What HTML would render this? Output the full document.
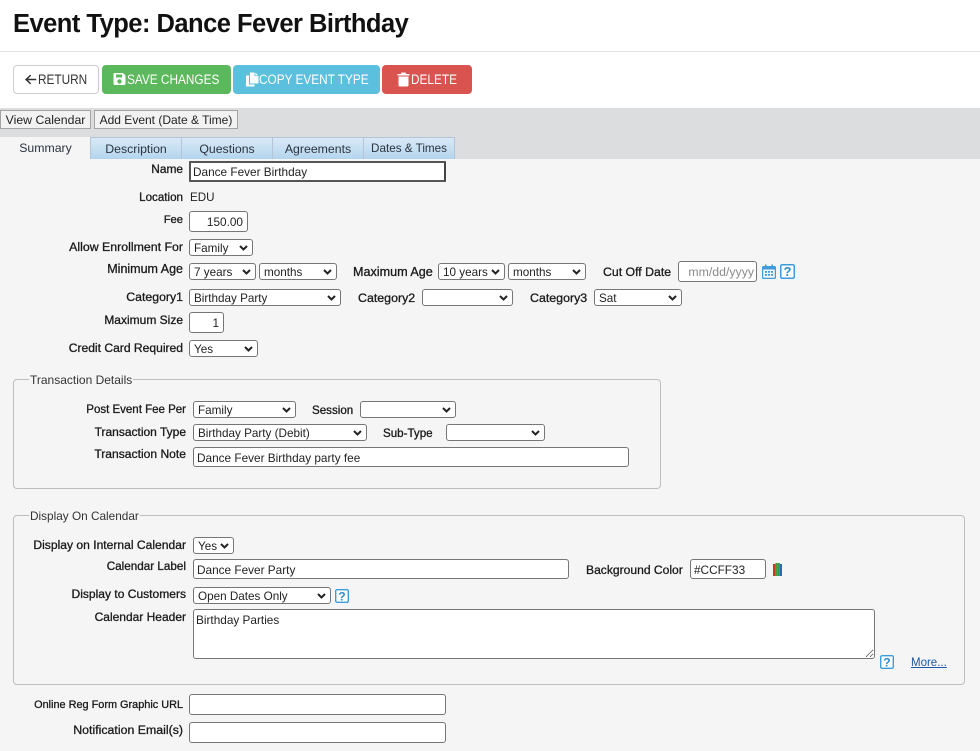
<!DOCTYPE html>
<html><head><meta charset="utf-8"><title>Event Type</title>
<style>
html,body{margin:0;padding:0}
body{width:980px;height:751px;overflow:hidden;background:#f5f5f5;position:relative;font-family:"Liberation Sans",sans-serif;font-size:12px;color:#222}
.a,label,select,input,textarea,.btn,.tab,.g{position:absolute;box-sizing:border-box}
#top{left:0;top:0;width:980px;height:108px;background:#fff}
#hr{left:0;top:51px;width:980px;height:1px;background:#e3e3e3}
h1{position:absolute;left:13px;top:9px;margin:0;font-size:25.5px;line-height:30px;font-weight:bold;color:#111;white-space:nowrap;letter-spacing:-.52px}
.btn{top:65px;height:29px;border-radius:4px;color:#fff;font-size:13.5px;line-height:29px;white-space:nowrap}
.btn svg{position:absolute;top:7px;fill:currentColor}
.btn span{position:absolute;top:0;transform:scaleX(.875);transform-origin:0 50%}
#band{left:0;top:108px;width:980px;height:51px;background:#dcddde}
.g{top:110px;height:19px;background:#f2f2f2;border:1px solid #a3a3a3;font-size:12.3px;line-height:18px;text-align:center;color:#222;white-space:nowrap}
.tab{top:137px;height:22px;background:linear-gradient(#d9e9f6,#b4d5ee);border:1px solid #b5c3d8;border-bottom:0;border-left:0;font-size:12.3px;line-height:22px;text-align:center;color:#2a3340;white-space:nowrap}
label{font-size:12.2px;line-height:14px;height:14px;text-align:right;white-space:nowrap;color:#1a1a1a;-webkit-text-stroke:.3px #1a1a1a}
.l1{left:0;width:183px}.l2{left:0;width:186px}
select,input,textarea{font-family:"Liberation Sans",sans-serif;font-size:11.8px;color:#222;background:#fff;border:1px solid #767676;border-radius:3px;margin:0;outline:0}
select{height:17px;padding:2px 0 0 4px;-webkit-appearance:none;appearance:none;font-size:11.7px;line-height:14px}
input{padding:2px 3px 0}
input.h21{padding-top:1px}
textarea{padding:3px 2px;resize:both}
.r{text-align:right;padding-right:4px}
fieldset{position:absolute;box-sizing:border-box;margin:0;padding:0;border:1px solid #bdbdbd;border-radius:4px;background:transparent}
legend{margin-left:15px;padding:0 1px;font-size:12px;line-height:13px;color:#333;position:relative;top:1px}
.t{position:absolute;white-space:nowrap;font-size:11.6px;line-height:14px}
.ic,.cv{position:absolute}
.cv{width:9px;height:6px}
a{position:absolute;color:#1e56a8;text-decoration:underline;font-size:11.5px;line-height:14px}
</style></head><body>
<div class="a" id="top"></div><div class="a" id="hr"></div>
<h1>Event Type: Dance Fever Birthday</h1>

<div class="btn" style="left:13px;width:86px;background:#fff;border:1px solid #ccc;color:#333">
<svg style="left:10px;top:7px" width="13" height="13" viewBox="0 0 13 13"><path d="M6.2 1.6 7.2 2.6 4 5.8H12.2V7.2H4L7.2 10.4 6.2 11.4 1 6.5Z"/></svg><span style="left:24px;top:-1px">RETURN</span></div>
<div class="btn" style="left:102px;width:129px;background:#5cb85c">
<svg style="left:11px" width="13" height="14" viewBox="0 0 13 14"><path fill-rule="evenodd" d="M1.5 1H10L12.5 3.5V11.5Q12.5 13 11 13H2Q.5 13 .5 11.5V2Q.5 1 1.5 1ZM3 2.5V5.5H9V2.5ZM6.5 7.2A2.2 2.2 0 1 0 6.5 11.6 2.2 2.2 0 1 0 6.5 7.2Z"/></svg><span style="left:25px">SAVE CHANGES</span></div>
<div class="btn" style="left:233px;width:147px;background:#5bc0de">
<svg style="left:12px" width="14" height="15" viewBox="0 0 14 15"><path d="M5 .5H9.5V4H13.5V11.5H5Z M10.3.8 13.2 3.2H10.3Z M1 3.5H4V12.5H9.5V14.5H1Z"/></svg><span style="left:26px">COPY EVENT TYPE</span></div>
<div class="btn" style="left:382px;width:90px;background:#d9534f">
<svg style="left:15px" width="13" height="15" viewBox="0 0 13 15"><path d="M4.5 .5H8.5L9.2 2H12.5V3.5H.5V2H3.8ZM1.5 4.5H11.5V13Q11.5 14.5 10 14.5H3Q1.5 14.5 1.5 13Z"/></svg><span style="left:29px">DELETE</span></div>

<div class="a" id="band"></div>
<div class="g" style="left:0;width:91px">View Calendar</div>
<div class="g" style="left:94px;width:144px;font-size:12px">Add Event (Date &amp; Time)</div>
<div class="tab" style="left:0;width:91px;background:#f5f5f5;border:0">Summary</div>
<div class="tab" style="left:90px;width:92px;border-left:1px solid #b5c3d8">Description</div>
<div class="tab" style="left:182px;width:91px">Questions</div>
<div class="tab" style="left:273px;width:91px">Agreements</div>
<div class="tab" style="left:364px;width:91px;font-size:11.7px">Dates &amp; Times</div>

<label class="l1" style="top:162px;font-size:11.9px">Name</label>
<input class="h21" style="left:189px;top:161px;width:257px;height:21px;border:2px solid #555;border-right-color:#444;border-radius:1px;padding:1px 2px 0" value="Dance Fever Birthday">
<label class="l1" style="top:191px;font-size:11.6px">Location</label>
<div class="t" style="left:190px;top:191px">EDU</div>
<label class="l1" style="top:213px;font-size:11.2px">Fee</label>
<input class="r h21" style="left:189px;top:211px;width:59px;height:21px;padding-right:4px" value="150.00">
<label class="l1" style="top:240px;font-size:12.35px">Allow Enrollment For</label>
<select style="left:189px;top:239px;width:64px"><option>Family</option></select>
<label class="l1" style="top:262px;font-size:12.5px">Minimum Age</label>
<select style="left:189px;top:263px;width:67px"><option>7 years</option></select>
<select style="left:259px;top:263px;width:78px"><option>months</option></select>
<label style="left:353px;top:265px;font-size:12.6px">Maximum Age</label>
<select style="left:438px;top:263px;width:67px"><option>10 years</option></select>
<select style="left:508px;top:263px;width:78px"><option>months</option></select>
<label style="left:603px;top:265px;font-size:12.3px">Cut Off Date</label>
<input style="left:678px;top:261px;width:79px;height:21px;text-align:right;padding:0 2px 0 0;color:#8a8a8a;font-size:12.3px" value="mm/dd/yyyy">
<svg class="ic" style="left:762px;top:264px" width="14" height="15" viewBox="0 0 14 15"><path fill="#3d9bdc" fill-rule="evenodd" d="M3 .5H4.5V2H9.5V.5H11V2H12.5Q14 2 14 3.5V13.5Q14 15 12.5 15H1.5Q0 15 0 13.5V3.5Q0 2 1.5 2H3ZM1.2 5.5V13.3Q1.2 13.8 1.7 13.8H12.3Q12.8 13.8 12.8 13.3V5.5ZM3 7H5V8.7H3ZM6 7H8V8.7H6ZM9 7H11V8.7H9ZM3 10H5V11.7H3ZM6 10H8V11.7H6ZM9 10H11V11.7H9Z"/></svg>
<svg class="ic" style="left:780px;top:264px" width="15" height="15" viewBox="0 0 15 15"><rect x=".75" y=".75" width="13.5" height="13.5" rx="1.5" fill="#fff" stroke="#3d9bdc" stroke-width="1.5"/><text x="7.5" y="12.2" text-anchor="middle" font-family="Liberation Sans" font-weight="bold" font-size="13" fill="#2f8ccc">?</text></svg>
<label class="l1" style="top:290px;font-size:12.3px">Category1</label>
<select style="left:189px;top:289px;width:152px"><option>Birthday Party</option></select>
<label style="left:358px;top:291px;font-size:12.4px">Category2</label>
<select style="left:422px;top:289px;width:91px"><option></option></select>
<label style="left:530px;top:291px;font-size:12.4px">Category3</label>
<select style="left:594px;top:289px;width:88px"><option>Sat</option></select>
<label class="l1" style="top:313px;font-size:12px">Maximum Size</label>
<input class="r h21" style="left:189px;top:312px;width:35px;height:21px;padding-right:4px" value="1">
<label class="l1" style="top:341px;font-size:12.1px">Credit Card Required</label>
<select style="left:189px;top:340px;width:69px"><option>Yes</option></select>

<fieldset style="left:13px;top:373px;width:648px;height:116px"><legend>Transaction Details</legend></fieldset>
<label class="l2" style="top:403px;font-size:11.5px">Post Event Fee Per</label>
<select style="left:193px;top:401px;width:103px"><option>Family</option></select>
<label style="left:312px;top:404px;font-size:11.6px">Session</label>
<select style="left:360px;top:401px;width:96px"><option></option></select>
<label class="l2" style="top:425px;font-size:12px">Transaction Type</label>
<select style="left:193px;top:424px;width:174px"><option>Birthday Party (Debit)</option></select>
<label style="left:383px;top:427px;font-size:11.6px">Sub-Type</label>
<select style="left:446px;top:424px;width:99px"><option></option></select>
<label class="l2" style="top:447px;font-size:12.1px">Transaction Note</label>
<input style="left:193px;top:447px;width:436px;height:20px" value="Dance Fever Birthday party fee">

<fieldset style="left:13px;top:509px;width:952px;height:176px"><legend style="font-size:11.8px">Display On Calendar</legend></fieldset>
<label class="l2" style="top:538px;font-size:12.1px">Display on Internal Calendar</label>
<select style="left:193px;top:537px;width:41px"><option>Yes</option></select>
<label class="l2" style="top:560px;font-size:11.7px">Calendar Label</label>
<input style="left:193px;top:559px;width:376px;height:20px" value="Dance Fever Party">
<label style="left:586px;top:563px;font-size:12.1px">Background Color</label>
<input style="left:690px;top:559px;width:76px;height:20px" value="#CCFF33">
<svg class="ic" style="left:773px;top:563px" width="9" height="13" viewBox="0 0 9 13"><rect x="0" y="1" width="2.4" height="12" fill="#c9372c"/><rect x="2.4" y="0" width="2.2" height="13" fill="#4a9a3a"/><rect x="4.6" y="0" width="2.2" height="13" fill="#2e9a55"/><rect x="6.8" y="1" width="2.2" height="12" fill="#2f64b8"/></svg>
<label class="l2" style="top:587px;font-size:12.05px">Display to Customers</label>
<select style="left:193px;top:587px;width:138px"><option>Open Dates Only</option></select>
<svg class="ic" style="left:335px;top:589px" width="14" height="14" viewBox="0 0 15 15"><rect x=".75" y=".75" width="13.5" height="13.5" rx="1.5" fill="#fff" stroke="#3d9bdc" stroke-width="1.5"/><text x="7.5" y="12.2" text-anchor="middle" font-family="Liberation Sans" font-weight="bold" font-size="13" fill="#2f8ccc">?</text></svg>
<label class="l2" style="top:610px;font-size:12px">Calendar Header</label>
<textarea style="left:193px;top:609px;width:682px;height:50px">Birthday Parties</textarea>
<svg class="ic" style="left:880px;top:655px" width="14" height="14" viewBox="0 0 15 15"><rect x=".75" y=".75" width="13.5" height="13.5" rx="1.5" fill="#fff" stroke="#3d9bdc" stroke-width="1.5"/><text x="7.5" y="12.2" text-anchor="middle" font-family="Liberation Sans" font-weight="bold" font-size="13" fill="#2f8ccc">?</text></svg>
<a style="left:911px;top:656px">More...</a>

<label class="l1" style="top:698px;font-size:10.9px">Online Reg Form Graphic URL</label>
<input style="left:189px;top:694px;width:257px;height:21px">
<label class="l1" style="top:723px;font-size:12.35px">Notification Email(s)</label>
<input style="left:189px;top:722px;width:257px;height:21px">

<svg class="cv" style="left:239px;top:245px" viewBox="0 0 9 6"><path d="M1 1 4.5 4.5 8 1" fill="none" stroke="#222" stroke-width="2"/></svg>
<svg class="cv" style="left:242px;top:269px" viewBox="0 0 9 6"><path d="M1 1 4.5 4.5 8 1" fill="none" stroke="#222" stroke-width="2"/></svg>
<svg class="cv" style="left:323px;top:269px" viewBox="0 0 9 6"><path d="M1 1 4.5 4.5 8 1" fill="none" stroke="#222" stroke-width="2"/></svg>
<svg class="cv" style="left:491px;top:269px" viewBox="0 0 9 6"><path d="M1 1 4.5 4.5 8 1" fill="none" stroke="#222" stroke-width="2"/></svg>
<svg class="cv" style="left:572px;top:269px" viewBox="0 0 9 6"><path d="M1 1 4.5 4.5 8 1" fill="none" stroke="#222" stroke-width="2"/></svg>
<svg class="cv" style="left:327px;top:295px" viewBox="0 0 9 6"><path d="M1 1 4.5 4.5 8 1" fill="none" stroke="#222" stroke-width="2"/></svg>
<svg class="cv" style="left:499px;top:295px" viewBox="0 0 9 6"><path d="M1 1 4.5 4.5 8 1" fill="none" stroke="#222" stroke-width="2"/></svg>
<svg class="cv" style="left:668px;top:295px" viewBox="0 0 9 6"><path d="M1 1 4.5 4.5 8 1" fill="none" stroke="#222" stroke-width="2"/></svg>
<svg class="cv" style="left:244px;top:346px" viewBox="0 0 9 6"><path d="M1 1 4.5 4.5 8 1" fill="none" stroke="#222" stroke-width="2"/></svg>
<svg class="cv" style="left:282px;top:407px" viewBox="0 0 9 6"><path d="M1 1 4.5 4.5 8 1" fill="none" stroke="#222" stroke-width="2"/></svg>
<svg class="cv" style="left:442px;top:407px" viewBox="0 0 9 6"><path d="M1 1 4.5 4.5 8 1" fill="none" stroke="#222" stroke-width="2"/></svg>
<svg class="cv" style="left:353px;top:430px" viewBox="0 0 9 6"><path d="M1 1 4.5 4.5 8 1" fill="none" stroke="#222" stroke-width="2"/></svg>
<svg class="cv" style="left:531px;top:430px" viewBox="0 0 9 6"><path d="M1 1 4.5 4.5 8 1" fill="none" stroke="#222" stroke-width="2"/></svg>
<svg class="cv" style="left:220px;top:543px" viewBox="0 0 9 6"><path d="M1 1 4.5 4.5 8 1" fill="none" stroke="#222" stroke-width="2"/></svg>
<svg class="cv" style="left:317px;top:593px" viewBox="0 0 9 6"><path d="M1 1 4.5 4.5 8 1" fill="none" stroke="#222" stroke-width="2"/></svg>
</body></html>
